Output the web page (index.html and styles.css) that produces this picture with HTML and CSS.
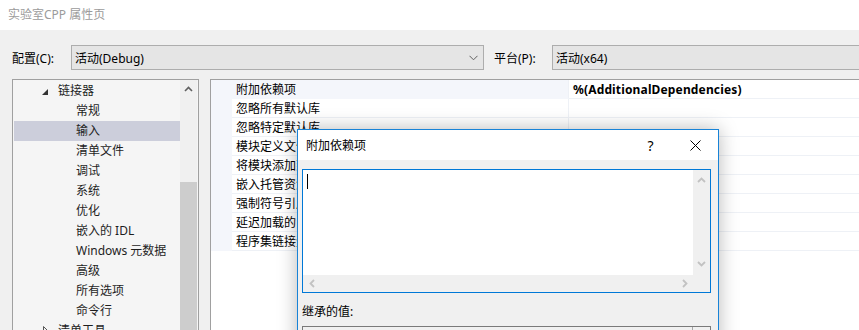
FILE: index.html
```html
<!DOCTYPE html>
<html lang="zh-CN">
<head>
  <meta charset="UTF-8" />
  <title>实验室CPP 属性页</title>
  <link rel="stylesheet" href="styles.css">
</head>
<body>
<div class="window">
  <div class="titlebar">实验室CPP 属性页</div>

  <div class="toolbar">
    <span class="field-label">配置(C):</span>
    <div class="combo combo-config">
      <span>活动(Debug)</span>
      <svg width="9" height="6" viewBox="0 0 9 6"><path d="M0.5 0.8 L4.5 4.8 L8.5 0.8" fill="none" stroke="#606060" stroke-width="1"/></svg>
    </div>
    <span class="field-label platform">平台(P):</span>
    <div class="combo combo-platform"><span>活动(x64)</span></div>
  </div>

  <div class="panels">
    <div class="tree">
      <ul class="tree-list">
        <li class="tree-item group"><svg class="twisty" width="6" height="6" viewBox="0 0 6 6"><path d="M6 0 L6 6 L0 6 Z" fill="#333"/></svg>链接器</li>
        <li class="tree-item">常规</li>
        <li class="tree-item selected">输入</li>
        <li class="tree-item">清单文件</li>
        <li class="tree-item">调试</li>
        <li class="tree-item">系统</li>
        <li class="tree-item">优化</li>
        <li class="tree-item">嵌入的 IDL</li>
        <li class="tree-item">Windows 元数据</li>
        <li class="tree-item">高级</li>
        <li class="tree-item">所有选项</li>
        <li class="tree-item">命令行</li>
        <li class="tree-item group"><svg class="twisty" width="6" height="9" viewBox="0 0 6 9"><path d="M0.5 0.5 L4.5 4.5 L0.5 8.5 Z" fill="none" stroke="#555" stroke-width="1"/></svg>清单工具</li>
      </ul>
      <div class="tree-scroll">
        <div class="scroll-btn">
          <svg width="9" height="6" viewBox="0 0 9 6"><path d="M1 5 L4.5 1.5 L8 5" fill="none" stroke="#606060" stroke-width="1.6"/></svg>
        </div>
        <div class="scroll-thumb"></div>
      </div>
    </div>

    <div class="props">
      <div class="prop-row current"><div class="prop-gutter"></div><div class="prop-name">附加依赖项</div><div class="prop-value">%(AdditionalDependencies)</div></div>
      <div class="prop-row"><div class="prop-gutter"></div><div class="prop-name">忽略所有默认库</div><div class="prop-value"></div></div>
      <div class="prop-row"><div class="prop-gutter"></div><div class="prop-name">忽略特定默认库</div><div class="prop-value"></div></div>
      <div class="prop-row"><div class="prop-gutter"></div><div class="prop-name">模块定义文件</div><div class="prop-value"></div></div>
      <div class="prop-row"><div class="prop-gutter"></div><div class="prop-name">将模块添加到程序集</div><div class="prop-value"></div></div>
      <div class="prop-row"><div class="prop-gutter"></div><div class="prop-name">嵌入托管资源文件</div><div class="prop-value"></div></div>
      <div class="prop-row"><div class="prop-gutter"></div><div class="prop-name">强制符号引用</div><div class="prop-value"></div></div>
      <div class="prop-row"><div class="prop-gutter"></div><div class="prop-name">延迟加载的 DLL</div><div class="prop-value"></div></div>
      <div class="prop-row"><div class="prop-gutter"></div><div class="prop-name">程序集链接资源</div><div class="prop-value"></div></div>
    </div>
  </div>

  <!-- modal dialog over the property page -->
  <div class="dialog">
    <div class="dialog-title">
      <span class="dialog-caption">附加依赖项</span>
      <div class="dlg-btn help">?</div>
      <div class="dlg-btn">
        <svg width="11" height="11" viewBox="0 0 11 11"><path d="M0.5 0.5 L10.5 10.5 M10.5 0.5 L0.5 10.5" stroke="#000" stroke-width="1"/></svg>
      </div>
    </div>
    <div class="dialog-body">
      <div class="editor">
        <div class="editor-text"><span class="caret"></span></div>
        <div class="vbar">
          <svg width="9" height="6" viewBox="0 0 9 6"><path d="M1 5 L4.5 1.5 L8 5" fill="none" stroke="#c2c2c2" stroke-width="1.8"/></svg>
          <svg width="9" height="6" viewBox="0 0 9 6"><path d="M1 1 L4.5 4.5 L8 1" fill="none" stroke="#c2c2c2" stroke-width="1.8"/></svg>
        </div>
        <div class="hbar">
          <svg width="6" height="9" viewBox="0 0 6 9"><path d="M5 1 L1.5 4.5 L5 8" fill="none" stroke="#c2c2c2" stroke-width="1.8"/></svg>
          <svg width="6" height="9" viewBox="0 0 6 9"><path d="M1 1 L4.5 4.5 L1 8" fill="none" stroke="#c2c2c2" stroke-width="1.8"/></svg>
        </div>
        <div class="corner"></div>
      </div>
      <div class="inherit-label">继承的值:</div>
      <div class="inherit-box"><div class="inherit-bar"></div></div>
    </div>
  </div>
</div>
</body>
</html>
```

FILE: styles.css
```css
* {
  box-sizing: border-box;
}
body {
  margin: 0;
  background: #f0f0f0;
  font-family: "Noto Sans", "Noto Sans CJK SC", sans-serif;
  font-size: 12px;
  color: #000;
  overflow: hidden;
}
.window {
  position: relative;
  width: 859px;
  height: 330px;
  overflow: hidden;
}
.titlebar {
  height: 30px;
  line-height: 30px;
  padding-left: 8px;
  background: #fff;
  color: #9b9b9b;
}

/* config / platform row */
.toolbar {
  display: flex;
  align-items: center;
  height: 49px;
  padding: 15px 0 9px 12px;
}
.field-label {
  width: 59px;
  flex-shrink: 0;
}
.field-label.platform {
  width: 58px;
  margin-left: 10px;
}
.combo {
  height: 25px;
  flex-shrink: 0;
  display: flex;
  align-items: center;
  justify-content: space-between;
  padding: 0 5px 0 3px;
  border: 1px solid #adadad;
  background: #e5e5e5;
}
.combo-config {
  width: 413px;
}
.combo-platform {
  width: 340px;
}

/* left tree + property grid */
.panels {
  display: flex;
  height: 251px;
  padding-left: 12px;
}
.tree {
  width: 187px;
  flex-shrink: 0;
  display: flex;
  border: 1px solid #a0a0a0;
  border-bottom: none;
  background: #f5f5f5;
}
.tree-list {
  list-style: none;
  margin: 0;
  padding: 1px 0 0 1px;
  width: 167px;
  overflow: hidden;
}
.tree-item {
  height: 20px;
  line-height: 20px;
  padding-left: 62px;
  white-space: nowrap;
  color: #1e1e1e;
}
.tree-item.group {
  padding-left: 28px;
}
.tree-item.selected {
  background: #cccedb;
}
.twisty {
  margin-right: 10px;
  vertical-align: 0;
}
.tree-item.group:last-child .twisty {
  margin-left: 1px;
  margin-right: 9px;
}
.tree-scroll {
  width: 17px;
  display: flex;
  flex-direction: column;
  background: #f0f0f0;
}
.scroll-btn {
  height: 17px;
  display: flex;
  align-items: center;
  justify-content: center;
}
.scroll-thumb {
  flex: 1;
  margin-top: 85px;
  background: #cdcdcd;
}

.props {
  flex: 1;
  margin-left: 11px;
  border-top: 1px solid #a0a0a0;
  border-left: 1px solid #a0a0a0;
  background: #fff;
}
.prop-row {
  display: flex;
  height: 19px;
  line-height: 18px;
}
.prop-gutter {
  width: 21px;
  background: #f4f6fb;
}
.prop-name {
  width: 337px;
  padding: 1px 0 0 4px;
  white-space: nowrap;
  overflow: visible;
  border-right: 1px solid #eef1f6;
  border-bottom: 1px solid #eef1f6;
}
.prop-row.current .prop-name {
  background: #f4f6fb;
  border-bottom-color: #f4f6fb;
}
.prop-value {
  flex: 1;
  padding: 1px 0 0 4px;
  font-weight: bold;
  letter-spacing: 0.15px;
  white-space: nowrap;
  border-bottom: 1px solid #eef1f6;
}

/* dialog */
.dialog {
  position: absolute;
  left: 297px;
  top: 129px;
  width: 422px;
  height: 240px;
  border: 1px solid #1883d7;
  background: #f0f0f0;
  box-shadow: 0 0 18px rgba(0, 0, 0, 0.28);
}
.dialog-title {
  height: 30px;
  display: flex;
  align-items: center;
  padding-left: 8px;
  background: #fff;
}
.dialog-caption {
  flex: 1;
}
.dlg-btn {
  width: 45px;
  height: 30px;
  display: flex;
  align-items: center;
  justify-content: center;
}
.dlg-btn.help {
  font-size: 14px;
}
.dialog-body {
  padding: 9px 0 0 4px;
}
.editor {
  width: 409px;
  height: 124px;
  display: grid;
  grid-template-columns: 1fr 17px;
  grid-template-rows: 1fr 17px;
  border: 1px solid #0078d7;
  background: #f0f0f0;
}
.editor-text {
  background: #fff;
}
.caret {
  display: block;
  width: 1px;
  height: 15px;
  margin: 4px 0 0 4px;
  background: #000;
}
.vbar {
  display: flex;
  flex-direction: column;
  align-items: center;
  justify-content: space-between;
  padding: 7px 0 8px;
}
.hbar {
  display: flex;
  align-items: center;
  justify-content: space-between;
  padding: 0 5px 0 6px;
}
.inherit-label {
  margin-top: 11px;
  line-height: 16px;
}
.inherit-box {
  width: 409px;
  height: 60px;
  margin-top: 6px;
  display: flex;
  justify-content: flex-end;
  border: 1px solid #7a7a7a;
  background: #f0f0f0;
}
.inherit-bar {
  width: 18px;
  border-left: 1px solid #a8a8a8;
}
```
